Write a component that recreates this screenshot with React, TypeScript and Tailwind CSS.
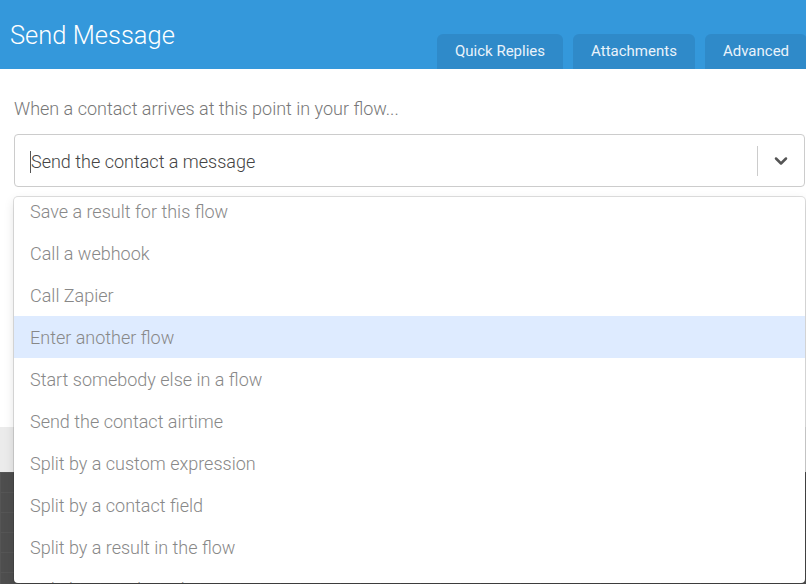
import { ChevronDown } from "lucide-react";

const options = [
  "Save a result for this flow",
  "Call a webhook",
  "Call Zapier",
  "Enter another flow",
  "Start somebody else in a flow",
  "Send the contact airtime",
  "Split by a custom expression",
  "Split by a contact field",
  "Split by a result in the flow",
  "Split by a random chance",
];

const tabs = [
  { label: "Quick Replies", width: "w-[126px]" },
  { label: "Attachments", width: "w-[122px]" },
  { label: "Advanced", width: "w-[102px]" },
];

export default function App() {
  return (
    <div className="relative h-[584px] w-[806px] overflow-hidden bg-white font-['Roboto',sans-serif]">
      <header className="flex h-[69px] items-end bg-[#3498db]">
        <h1 className="flex-1 self-start pl-[10px] pt-[18px] text-[25.5px] font-light leading-[34px] text-white">
          Send Message
        </h1>
        <div className="-mr-[1px] flex gap-[10px]">
          {tabs.map((tab) => (
            <div
              key={tab.label}
              className={`${tab.width} flex h-[35px] items-center justify-center rounded-t-[6px] bg-[#2f8ac9] text-[15px] text-[#eaf3fb]`}
            >
              {tab.label}
            </div>
          ))}
        </div>
      </header>

      <div className="px-[14px] pr-[1px]">
        <p className="pt-[29px] text-[18px] font-light leading-[22px] text-[#777]">
          When a contact arrives at this point in your flow...
        </p>
        <div className="mt-[14px] flex h-[53px] items-center rounded-[4px] border border-[#ccc] bg-white">
          <div className="flex flex-1 items-center pl-[15px] pt-[2px]">
            <span className="h-[22px] w-px bg-[#555]" />
            <span className="text-[18px] font-light text-[#444]">Send the contact a message</span>
          </div>
          <span className="h-[30px] w-px bg-[#ccc]" />
          <div className="flex w-[46px] items-center justify-center text-[#555]">
            <ChevronDown size={20} strokeWidth={3} />
          </div>
        </div>
      </div>

      <div className="mt-[240px] h-[45px] bg-[#ebebeb]" />
      <div className="h-[200px] bg-[#4e4e4e] bg-[linear-gradient(#555_1px,transparent_1px),linear-gradient(90deg,#555_1px,transparent_1px)] bg-[size:20px_20px]" />

      <div className="absolute left-[14px] top-[197px] h-[386px] w-[791px] overflow-hidden rounded-[4px] bg-white shadow-[0_0_0_1px_rgba(0,0,0,0.12),0_4px_11px_rgba(0,0,0,0.12)]">
        <ul className="-mt-[7px]">
          {options.map((option) => (
            <li
              key={option}
              className={`flex h-[42px] items-center px-[16px] text-[18px] font-light text-[#888] ${
                option === "Enter another flow" ? "bg-[#deebff]" : ""
              }`}
            >
              {option}
            </li>
          ))}
        </ul>
      </div>
    </div>
  );
}
